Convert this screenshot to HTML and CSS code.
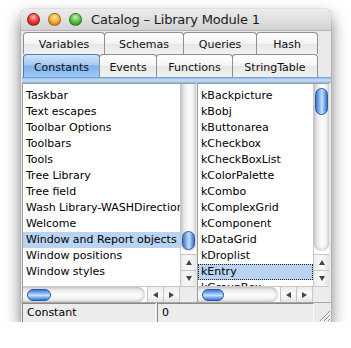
FILE: index.html
```html
<!DOCTYPE html>
<html lang="en">
<head>
    <meta charset="UTF-8">
    <title>Catalog - Library Module 1</title>
    <link rel="stylesheet" href="styles.css">
</head>
<body>
    <div class="window">
        <div class="titlebar">
            <span class="light red"></span>
            <span class="light yellow"></span>
            <span class="light green"></span>
            <span class="title">Catalog – Library Module 1</span>
        </div>

        <div class="tabs">
            <div class="tabrow">
                <div class="tab w82">Variables</div>
                <div class="tab w80">Schemas</div>
                <div class="tab w74">Queries</div>
                <div class="tab w62">Hash</div>
            </div>
            <div class="tabrow">
                <div class="tab w77 selected">Constants</div>
                <div class="tab w58">Events</div>
                <div class="tab w77">Functions</div>
                <div class="tab w86">StringTable</div>
            </div>
        </div>
        <div class="tabline"></div>

        <div class="panes">
            <div class="pane left">
                <div class="pane-body">
                    <ul class="list">
                        <li>Taskbar</li>
                        <li>Text escapes</li>
                        <li>Toolbar Options</li>
                        <li>Toolbars</li>
                        <li>Tools</li>
                        <li>Tree Library</li>
                        <li>Tree field</li>
                        <li>Wash Library-WASHDirectional</li>
                        <li>Welcome</li>
                        <li class="selected">Window and Report objects</li>
                        <li>Window positions</li>
                        <li>Window styles</li>
                    </ul>
                    <div class="vscroll">
                        <div class="vtrack">
                            <div class="vthumb thumb-low"></div>
                        </div>
                        <div class="arrow"><span class="tri up"></span></div>
                        <div class="arrow"><span class="tri down"></span></div>
                    </div>
                </div>
                <div class="hscroll">
                    <div class="htrack">
                        <div class="hthumb"></div>
                    </div>
                    <div class="arrow h"><span class="tri lefta"></span></div>
                    <div class="arrow h"><span class="tri righta"></span></div>
                    <div class="corner"></div>
                </div>
            </div>

            <div class="pane right">
                <div class="pane-body">
                    <ul class="list">
                        <li>kBackpicture</li>
                        <li>kBobj</li>
                        <li>kButtonarea</li>
                        <li>kCheckbox</li>
                        <li>kCheckBoxList</li>
                        <li>kColorPalette</li>
                        <li>kCombo</li>
                        <li>kComplexGrid</li>
                        <li>kComponent</li>
                        <li>kDataGrid</li>
                        <li>kDroplist</li>
                        <li class="selected focus">kEntry</li>
                        <li>kGroupBox</li>
                    </ul>
                    <div class="vscroll">
                        <div class="vtrack">
                            <div class="vthumb thumb-top"></div>
                        </div>
                        <div class="arrow"><span class="tri up"></span></div>
                        <div class="arrow"><span class="tri down"></span></div>
                    </div>
                </div>
                <div class="hscroll">
                    <div class="htrack">
                        <div class="hthumb short"></div>
                    </div>
                    <div class="arrow h"><span class="tri lefta"></span></div>
                    <div class="arrow h"><span class="tri righta"></span></div>
                    <div class="corner"></div>
                </div>
            </div>
        </div>

        <div class="status">
            <div class="field name">Constant</div>
            <div class="field value">0</div>
            <div class="grow">
                <svg width="14" height="14" viewBox="0 0 14 14">
                    <path d="M3 13 L13 3 M7 13 L13 7 M11 13 L13 11" stroke="#8a8a8a" stroke-width="1" fill="none"/>
                    <path d="M4 13 L13 4 M8 13 L13 8 M12 13 L13 12" stroke="#fff" stroke-width="1" fill="none"/>
                </svg>
            </div>
        </div>
    </div>
</body>
</html>
```

FILE: styles.css
```css
html, body {
    margin: 0;
    padding: 0;
    background: #fff;
}
body {
    font-family: "DejaVu Sans", "Liberation Sans", sans-serif;
    font-size: 11px;
    color: #000;
}
.window {
    width: 310px;
    height: 313px;
    margin: 9px 0 0 21px;
    background: #e9e9e9;
    border-radius: 5px 5px 0 0;
    box-shadow: 0 8px 16px rgba(0, 0, 0, 0.55), 0 0 1px rgba(0, 0, 0, 0.5);
    display: flex;
    flex-direction: column;
    overflow: hidden;
}

/* title bar */
.titlebar {
    height: 22px;
    flex: none;
    display: flex;
    align-items: center;
    padding-left: 6px;
    background: linear-gradient(#ececec, #d3d3d3);
    border-bottom: 1px solid #b5b5b5;
    box-sizing: border-box;
}
.light {
    width: 13px;
    height: 13px;
    border-radius: 50%;
    margin-right: 8px;
    box-sizing: border-box;
    border: 1px solid rgba(0, 0, 0, 0.35);
}
.red { background: radial-gradient(circle at 50% 30%, #ffb3a8 0, #e8322a 55%, #a51410 100%); }
.yellow { background: radial-gradient(circle at 50% 30%, #ffe7a3 0, #f5a623 55%, #b56a08 100%); }
.green { background: radial-gradient(circle at 50% 30%, #c8f2a6 0, #54b842 55%, #2a7a1a 100%); }
.title {
    margin-left: 1px;
    font-size: 13px;
    letter-spacing: -0.2px;
    color: #1a1a1a;
}

/* tabs */
.tabs {
    height: 46px;
    flex: none;
    padding-left: 2px;
}
.tabrow {
    display: flex;
    height: 23px;
}
.tab {
    box-sizing: border-box;
    height: 23px;
    margin-right: -1px;
    border: 1px solid #8f8f8f;
    border-bottom: none;
    border-radius: 4px 4px 0 0;
    background: linear-gradient(#ffffff, #f4f4f4 50%, #e6e6e6 51%, #f2f2f2);
    display: flex;
    align-items: center;
    justify-content: center;
    padding-top: 2px;
    font-size: 11px;
    color: #111;
}
.tabrow:first-child .tab {
    margin-top: 1px;
    height: 22px;
}
.tab.selected {
    border-color: #4f79b0;
    background: linear-gradient(#cfe3f9, #a5c9f1 45%, #7eb1ea 50%, #9fcaf5 100%);
}
.w82 { width: 82px; }
.w80 { width: 80px; }
.w74 { width: 74px; }
.w62 { width: 62px; }
.w77 { width: 77px; }
.w58 { width: 58px; }
.w86 { width: 86px; }

.tabline {
    height: 6px;
    flex: none;
    margin-left: 1px;
    background: linear-gradient(#5d8fd0 0, #8fb9e8 1px, #c8dff6 3px, #a9c9ec 5px, #8db2db 6px);
}

/* panes */
.panes {
    flex: none;
    display: flex;
    height: 219px;
    padding-left: 1px;
}
.pane {
    display: flex;
    flex-direction: column;
    background: #fff;
}
.pane.left {
    width: 174px;
    margin-right: 1px;
}
.pane.right {
    width: 132px;
}
.pane-body {
    display: flex;
    height: 203px;
    border-top: 1px solid #9a9a9a;
    border-left: 1px solid #9a9a9a;
    box-sizing: border-box;
}
.list {
    list-style: none;
    margin: 0;
    padding: 4px 0 0 0;
    flex: 1;
    overflow: hidden;
}
.list li {
    height: 16px;
    line-height: 16px;
    padding-left: 3px;
    white-space: nowrap;
    overflow: hidden;
    box-sizing: border-box;
}
.list li.selected {
    background: #b9d3f3;
}
.list li.focus {
    outline: 1px dotted #222;
    outline-offset: -1px;
}

.vscroll {
    width: 16px;
    flex: none;
    display: flex;
    flex-direction: column;
    border-left: 1px solid #c8c8c8;
    box-sizing: border-box;
}
.vtrack {
    flex: 1;
    border-radius: 0 0 7px 7px;
    background: linear-gradient(to right, #cfcfcf, #ececec 25%, #fdfdfd 55%, #f2f2f2 80%, #d6d6d6);
    box-shadow: inset 0 -2px 3px rgba(0, 0, 0, 0.12);
    margin-bottom: 3px;
}
.vthumb {
    width: 13px;
    margin-left: 1px;
    border-radius: 7px;
    box-sizing: border-box;
    border: 1px solid #2c5aa8;
    background: linear-gradient(to right, #3f77cf, #9cc6f7 40%, #c4e0fc 55%, #6fa5ea 80%, #3a6fc6);
}
.thumb-low {
    margin-top: 147px;
    height: 19px;
}
.thumb-top {
    margin-top: 4px;
    height: 27px;
}
.arrow {
    height: 15px;
    flex: none;
    display: flex;
    align-items: center;
    justify-content: center;
    background: linear-gradient(to right, #ececec, #fafafa 50%, #e4e4e4);
    border-top: 1px solid #c4c4c4;
}
.arrow.h {
    width: 15px;
    height: auto;
    border-top: none;
    border-left: 1px solid #c4c4c4;
    background: linear-gradient(#ececec, #fafafa 50%, #e4e4e4);
}
.tri {
    width: 0;
    height: 0;
}
.tri.up {
    border-left: 3px solid transparent;
    border-right: 3px solid transparent;
    border-bottom: 5px solid #444;
}
.tri.down {
    border-left: 3px solid transparent;
    border-right: 3px solid transparent;
    border-top: 5px solid #444;
}
.tri.lefta {
    border-top: 3px solid transparent;
    border-bottom: 3px solid transparent;
    border-right: 5px solid #444;
}
.tri.righta {
    border-top: 3px solid transparent;
    border-bottom: 3px solid transparent;
    border-left: 5px solid #444;
}

.hscroll {
    height: 16px;
    flex: none;
    display: flex;
    border-top: 1px solid #c8c8c8;
    border-left: 1px solid #9a9a9a;
    box-sizing: border-box;
}
.htrack {
    flex: 1;
    margin-right: 2px;
    border-radius: 0 7px 7px 0;
    background: linear-gradient(#d2d2d2, #efefef 25%, #fdfdfd 55%, #f2f2f2 80%, #d8d8d8);
    box-shadow: inset -2px 0 3px rgba(0, 0, 0, 0.12);
    display: flex;
    align-items: center;
}
.hthumb {
    height: 12px;
    width: 24px;
    margin-left: 4px;
    border-radius: 7px;
    box-sizing: border-box;
    border: 1px solid #2c5aa8;
    background: linear-gradient(#3f77cf, #9cc6f7 40%, #c4e0fc 55%, #6fa5ea 80%, #3a6fc6);
}
.hthumb.short {
    width: 22px;
    margin-left: 4px;
}
.corner {
    width: 16px;
    flex: none;
    background: #ececec;
    border-left: 1px solid #c8c8c8;
}

/* status bar */
.status {
    flex: none;
    height: 20px;
    display: flex;
    padding-left: 1px;
    border-top: 1px solid #a8a8a8;
    box-sizing: border-box;
}
.field {
    box-sizing: border-box;
    border-left: 1px solid #8a8a8a;
    border-top: 1px solid #8a8a8a;
    border-right: 1px solid #fafafa;
    background: #ececec;
    padding-left: 4px;
    line-height: 17px;
    font-size: 11px;
}
.field.name {
    width: 134px;
}
.field.value {
    width: 157px;
    margin-left: 1px;
}
.grow {
    width: 17px;
    display: flex;
    align-items: flex-end;
    justify-content: flex-end;
    background: #e9e9e9;
}
```
